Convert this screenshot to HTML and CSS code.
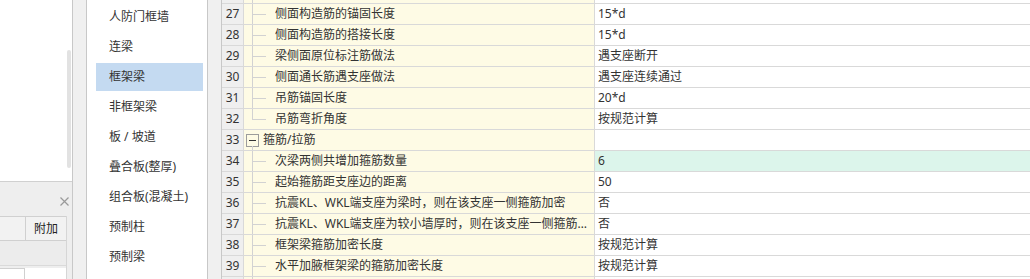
FILE: index.html
```html
<!DOCTYPE html>
<html lang="zh-CN">
<head>
<meta charset="utf-8">
<title>计算设置</title>
<link rel="stylesheet" href="styles.css">
</head>
<body>
<div class="app">
  <div class="left">
    <div class="left-top"><div class="thumb"></div></div>
    <div class="left-bottom">
      <div class="lb-head">
        <svg class="close" width="9" height="9" viewBox="0 0 9 9"><path d="M0.5 0.5 L8.5 8.5 M8.5 0.5 L0.5 8.5" stroke="#9a9a9a" stroke-width="1.2" fill="none"/></svg>
      </div>
      <div class="lb-grid">
        <div class="lb-main">
          <div class="lb-hrow"><div class="lb-c1"></div><div class="lb-c2">附加</div></div>
          <div class="lb-grey"></div>
          <div class="lb-row"><div class="lb-cell"></div></div>
        </div>
        <div class="lb-scroll"></div>
      </div>
    </div>
  </div>
  <div class="gap"></div>
  <div class="list">
    <div class="item">人防门框墙</div>
    <div class="item">连梁</div>
    <div class="item sel">框架梁</div>
    <div class="item">非框架梁</div>
    <div class="item">板 / 坡道</div>
    <div class="item">叠合板(整厚)</div>
    <div class="item">组合板(混凝土)</div>
    <div class="item">预制柱</div>
    <div class="item">预制梁</div>
  </div>
  <div class="gap"></div>
  <div class="table">
    <div class="rows">
      <div class="row"><div class="num"></div><div class="name"><span class="tree"></span><span class="label"></span></div><div class="val"></div></div>
      <div class="row"><div class="num">27</div><div class="name"><span class="tree"></span><span class="label">侧面构造筋的锚固长度</span></div><div class="val">15*d</div></div>
      <div class="row"><div class="num">28</div><div class="name"><span class="tree"></span><span class="label">侧面构造筋的搭接长度</span></div><div class="val">15*d</div></div>
      <div class="row"><div class="num">29</div><div class="name"><span class="tree"></span><span class="label">梁侧面原位标注筋做法</span></div><div class="val">遇支座断开</div></div>
      <div class="row"><div class="num">30</div><div class="name"><span class="tree"></span><span class="label">侧面通长筋遇支座做法</span></div><div class="val">遇支座连续通过</div></div>
      <div class="row"><div class="num">31</div><div class="name"><span class="tree"></span><span class="label">吊筋锚固长度</span></div><div class="val">20*d</div></div>
      <div class="row"><div class="num">32</div><div class="name"><span class="tree last"></span><span class="label">吊筋弯折角度</span></div><div class="val">按规范计算</div></div>
      <div class="row"><div class="num">33</div><div class="name grp"><span class="toggle"><span class="minus"></span></span><span class="label">箍筋/拉筋</span></div><div class="val"></div></div>
      <div class="row"><div class="num">34</div><div class="name"><span class="tree"></span><span class="label">次梁两侧共增加箍筋数量</span></div><div class="val hl">6</div></div>
      <div class="row"><div class="num">35</div><div class="name"><span class="tree"></span><span class="label">起始箍筋距支座边的距离</span></div><div class="val">50</div></div>
      <div class="row"><div class="num">36</div><div class="name"><span class="tree"></span><span class="label">抗震KL、WKL端支座为梁时，则在该支座一侧箍筋加密</span></div><div class="val">否</div></div>
      <div class="row"><div class="num">37</div><div class="name"><span class="tree"></span><span class="label">抗震KL、WKL端支座为较小墙厚时，则在该支座一侧箍筋…</span></div><div class="val">否</div></div>
      <div class="row"><div class="num">38</div><div class="name"><span class="tree"></span><span class="label">框架梁箍筋加密长度</span></div><div class="val">按规范计算</div></div>
      <div class="row"><div class="num">39</div><div class="name"><span class="tree"></span><span class="label">水平加腋框架梁的箍筋加密长度</span></div><div class="val">按规范计算</div></div>
      <div class="row"><div class="num"></div><div class="name"><span class="tree"></span><span class="label"></span></div><div class="val"></div></div>
    </div>
  </div>
</div>
</body>
</html>
```

FILE: styles.css
```css
* { box-sizing: border-box; margin: 0; padding: 0; }
html, body { width: 1030px; height: 279px; overflow: hidden; background: #f0f0f0; }
body {
  font-family: "Noto Sans", "Noto Sans CJK SC", sans-serif;
  font-size: 12px;
  color: #333;
}
.app { display: flex; height: 279px; }

/* left docked panel */
.left {
  width: 73px;
  border-right: 1px solid #c8c8c8;
  display: flex;
  flex-direction: column;
  background: #fff;
  flex: none;
}
.left-top { height: 181px; display: flex; justify-content: flex-end; }
.thumb { width: 4px; height: 118px; margin-top: 50px; margin-right: 1px; background: #e2e2e2; border-radius: 2px; }
.left-bottom { flex: 1; border-top: 1px solid #d0d0d0; background: #eeeeee; display: flex; flex-direction: column; }
.lb-head { height: 34px; display: flex; align-items: center; justify-content: flex-end; padding-right: 3px; padding-top: 5px; }
.lb-grid { flex: 1; display: flex; }
.lb-main { width: 67px; display: flex; flex-direction: column; border-right: 1px solid #d6d6d6; }
.lb-hrow { height: 25px; display: flex; border-top: 1px solid #d0d0d0; border-bottom: 1px solid #d0d0d0; background: #f2f2f2; }
.lb-c1 { width: 26px; border-right: 1px solid #d0d0d0; }
.lb-c2 { flex: 1; text-align: center; line-height: 23px; color: #222; }
.lb-grey { height: 25px; background: #ececec; border-bottom: 1px solid #dadada; }
.lb-row { flex: 1; margin-top: 2px; background: #fff; }
.lb-cell { width: 25px; height: 100%; border-top: 1px solid #d0d0d0; border-right: 1px solid #d0d0d0; }
.lb-scroll { flex: 1; background: #eeeeee; }

.gap { width: 13px; flex: none; background: #f0f0f0; }

/* category list */
.list {
  width: 122px;
  flex: none;
  border-left: 1px solid #c8c8c8;
  border-right: 1px solid #c8c8c8;
  background: #fff;
  padding: 3px 4px 0 9px;
}
.item { height: 28px; margin-bottom: 2px; line-height: 28px; padding-left: 13px; color: #333; white-space: nowrap; }
.item.sel { background: #c4daf1; }

/* property table */
.table { flex: 1; border-left: 1px solid #c8c8c8; background: #fff; overflow: hidden; }
.rows { margin-top: -17px; }
.row { display: flex; height: 21px; border-bottom: 1px solid #d9d9d9; }
.num { width: 22px; flex: none; background: #efefef; border-right: 1px solid #d9d9d9; text-align: center; line-height: 20px; color: #333; }
.name {
  width: 351px;
  flex: none;
  background: #fefbe5;
  border-right: 1px solid #d9d9d9;
  display: flex;
  align-items: center;
  position: relative;
  min-width: 0;
  overflow: hidden;
}
.label { flex: 1; min-width: 0; white-space: nowrap; overflow: hidden; padding-right: 4px; line-height: 20px; }
.tree { width: 31px; flex: none; align-self: stretch; position: relative; }
.tree::before { content: ""; position: absolute; left: 8px; top: 0; bottom: 0; width: 1px; background: #d2d2d2; }
.tree.last::before { bottom: 50%; }
.tree::after { content: ""; position: absolute; left: 8px; top: 50%; width: 14px; height: 1px; background: #d2d2d2; }
.grp::after { content: ""; position: absolute; left: 8px; top: 16px; bottom: 0; width: 1px; background: #d2d2d2; }
.toggle {
  width: 13px; height: 13px; flex: none;
  margin-left: 2px; margin-right: 4px;
  border: 1px solid #9c9c9c;
  display: flex; align-items: center; justify-content: center;
}
.minus { width: 7px; height: 1px; background: #333; }
.val { flex: 1; padding-left: 3px; line-height: 20px; white-space: nowrap; }
.val.hl { background: #dcf5eb; }
```
